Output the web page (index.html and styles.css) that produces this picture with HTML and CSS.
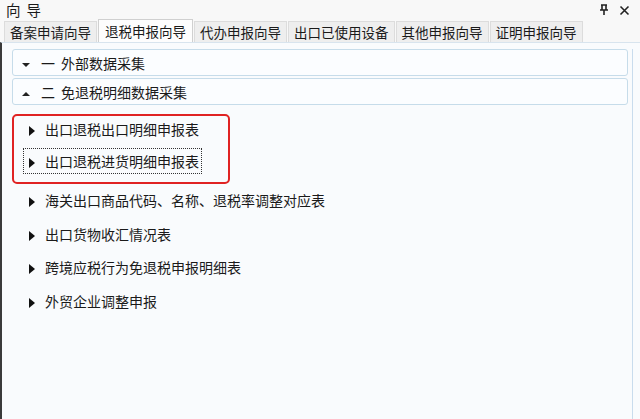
FILE: index.html
```html
<!DOCTYPE html>
<html lang="zh-CN">
<head>
    <meta charset="UTF-8">
    <title>向导</title>
    <link rel="stylesheet" href="styles.css">
</head>
<body>
    <div class="window">
        <div class="titlebar">
            <span class="title">向导</span>
            <span class="tools">
                <svg class="pin" width="10" height="12" viewBox="0 0 10 12"><path d="M2 1h6M3 1v5M7 1v5M1 6h8M5 6v5" stroke="#222" stroke-width="1.6" fill="none"/></svg>
                <svg class="close" width="11" height="11" viewBox="0 0 11 11"><path d="M1.5 1.5l8 8M9.5 1.5l-8 8" stroke="#222" stroke-width="1.6"/></svg>
            </span>
        </div>
        <div class="tabs">
            <div class="tab">备案申请向导</div>
            <div class="tab active">退税申报向导</div>
            <div class="tab">代办申报向导</div>
            <div class="tab">出口已使用设备</div>
            <div class="tab">其他申报向导</div>
            <div class="tab">证明申报向导</div>
        </div>
        <div class="panel">
            <div class="inner">
                <div class="group">
                    <span class="caret down"></span><span class="num">一</span>外部数据采集
                </div>
                <div class="group">
                    <span class="caret up"></span><span class="num">二</span>免退税明细数据采集
                </div>
                <div class="highlight">
                    <div class="item"><span class="tri"></span>出口退税出口明细申报表</div>
                    <div class="item"><span class="focus"><span class="tri"></span>出口退税进货明细申报表</span></div>
                </div>
                <div class="item"><span class="tri"></span>海关出口商品代码、名称、退税率调整对应表</div>
                <div class="item"><span class="tri"></span>出口货物收汇情况表</div>
                <div class="item"><span class="tri"></span>跨境应税行为免退税申报明细表</div>
                <div class="item"><span class="tri"></span>外贸企业调整申报</div>
            </div>
        </div>
    </div>
</body>
</html>
```

FILE: styles.css
```css
body {
    margin: 0;
    background-color: #f6f8fa;
    font-family: "Noto Sans CJK SC", "Noto Sans", sans-serif;
    color: #1a1a1a;
}
.window {
    width: 640px;
    height: 419px;
    display: flex;
    flex-direction: column;
    overflow: hidden;
}
.titlebar {
    height: 20px;
    display: flex;
    justify-content: space-between;
    align-items: center;
    padding: 0 10px 0 6px;
    background-color: #f8f8f8;
}
.title {
    font-size: 14.5px;
    line-height: 20px;
    letter-spacing: 6px;
}
.tools {
    display: flex;
    gap: 10px;
    align-items: center;
}
.tabs {
    display: flex;
    align-items: flex-end;
    height: 22px;
    padding-left: 4px;
    background-color: #f8f8f8;
}
.tab {
    height: 21px;
    line-height: 21px;
    font-size: 13.5px;
    padding: 0 5px;
    background-color: #eeeeee;
    border: 1px solid #dcdcdc;
    border-bottom: none;
    margin-right: 1px;
    box-sizing: border-box;
}
.tab.active {
    height: 23px;
    line-height: 22px;
    padding: 0 6px;
    background-color: #fdfdfd;
    border-color: #d0d0d0;
}
.panel {
    flex: 1;
    border-left: 2px solid #3a3a3a;
    border-top: 1px solid #d8e4ee;
    background-color: #f9fbfd;
    padding: 6px 6px 0 10px;
}
.inner {
    height: 100%;
    border-right: 1px solid #c9dced;
    margin-right: 1px;
}
.group {
    height: 27px;
    line-height: 26px;
    font-size: 14px;
    background-color: #fbfdff;
    border: 1px solid #c6dcea;
    border-radius: 3px;
    margin-bottom: 2px;
    margin-right: 4px;
    padding-left: 9px;
    box-sizing: border-box;
}
.caret {
    display: inline-block;
    width: 0;
    height: 0;
    border-left: 4px solid transparent;
    border-right: 4px solid transparent;
    vertical-align: 2px;
}
.caret.down {
    border-top: 4px solid #222;
}
.caret.up {
    border-bottom: 4px solid #222;
}
.num {
    display: inline-block;
    margin-left: 11px;
    width: 20px;
}
.highlight {
    width: 214px;
    height: 66px;
    border: 2px solid #e02323;
    border-radius: 5px;
    margin-top: 9px;
    margin-bottom: 0;
}
.item {
    height: 33.6px;
    line-height: 32px;
    font-size: 14px;
    padding-left: 17px;
}
.highlight .item {
    height: 32px;
    line-height: 26px;
    padding-left: 15px;
}
.tri {
    display: inline-block;
    width: 0;
    height: 0;
    border-top: 5px solid transparent;
    border-bottom: 5px solid transparent;
    border-left: 6px solid #111;
    margin-right: 10px;
    vertical-align: -1px;
}
.focus {
    outline: 1px dotted #333;
    padding: 2px 2px 2px 2px;
    margin-left: -5px;
    padding-left: 5px;
}
```
